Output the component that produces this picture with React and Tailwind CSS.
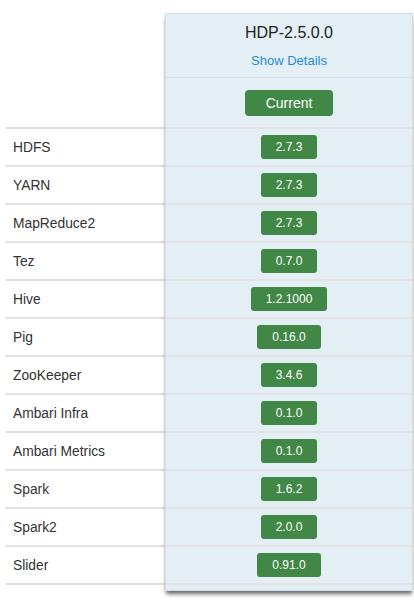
import React from 'react';

const services = [
  { name: 'HDFS', version: '2.7.3' },
  { name: 'YARN', version: '2.7.3' },
  { name: 'MapReduce2', version: '2.7.3' },
  { name: 'Tez', version: '0.7.0' },
  { name: 'Hive', version: '1.2.1000' },
  { name: 'Pig', version: '0.16.0' },
  { name: 'ZooKeeper', version: '3.4.6' },
  { name: 'Ambari Infra', version: '0.1.0' },
  { name: 'Ambari Metrics', version: '0.1.0' },
  { name: 'Spark', version: '1.6.2' },
  { name: 'Spark2', version: '2.0.0' },
  { name: 'Slider', version: '0.91.0' },
];

export default function App() {
  return (
    <div className="flex pt-[13px] pl-[5px] bg-white min-h-[604px] font-['Liberation_Sans',Arial,sans-serif] text-[#333]">
      {/* Service names */}
      <div className="w-[160px] pt-[114px]">
        {services.map((s, i) => (
          <div
            key={s.name}
            className={`h-[38px] flex items-center pl-2 pt-[2px] text-[13.8px] border-t-2 border-[#e2e2e2] ${
              i === services.length - 1 ? 'border-b-2 h-[40px]' : ''
            }`}
          >
            {s.name}
          </div>
        ))}
      </div>

      {/* Stack column */}
      <div className="w-[248px] h-[578px] bg-[#e4eff5] border border-[#d2dee4] shadow-[0_4px_4px_-1px_rgba(0,0,0,0.6)]">
        <div className="flex flex-col items-center pt-[9px] h-[64px] border-b border-[#d6e2e8]">
          <div className="text-[16px] leading-[20px] text-[#222]">HDP-2.5.0.0</div>
          <div className="mt-[10px] text-[13px] leading-[16px] text-[#1c8ed6]">Show Details</div>
        </div>
        <div className="h-[49px] flex items-center justify-center pt-[1px]">
          <div className="w-[88px] h-[26px] rounded-[4px] bg-[#418847] text-white text-[14px] flex items-center justify-center">
            Current
          </div>
        </div>
        {services.map((s, i) => (
          <div
            key={s.name}
            className={`h-[38px] flex items-center justify-center border-t-2 border-[#e3e1e2] ${
              i === services.length - 1 ? 'border-b-2 h-[40px]' : ''
            }`}
          >
            <span className="h-6 px-[15px] rounded-[3px] bg-[#418847] text-white text-[12px] flex items-center">
              {s.version}
            </span>
          </div>
        ))}
      </div>
    </div>
  );
}
